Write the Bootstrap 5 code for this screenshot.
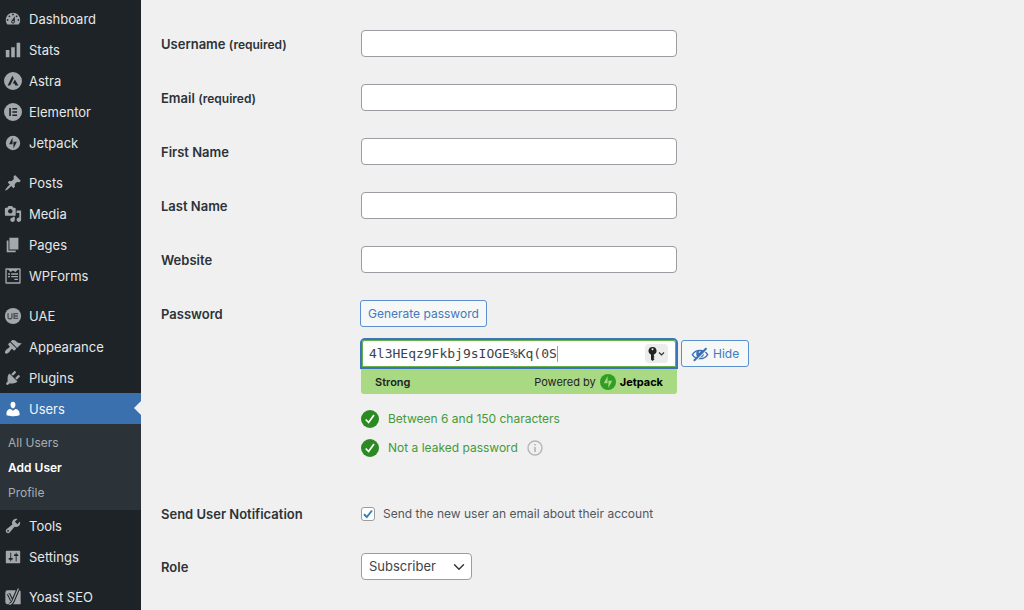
<!DOCTYPE html>
<html lang="en">
<head>
<meta charset="utf-8">
<meta name="viewport" content="width=device-width, initial-scale=1">
<title>Add User</title>
<link rel="stylesheet" href="https://cdn.jsdelivr.net/npm/bootstrap@5.3.0/dist/css/bootstrap.min.css">
<style>
  html { scrollbar-width: none; }
  html::-webkit-scrollbar { display: none; }
  body { background: #f0f0f0; color: #50575e; font: 13px/20px Inter, "Liberation Sans", sans-serif; }
  .admin-menu { width: 141px; background: #1d2327; padding-top: 3px; }
  .admin-menu .nav-link { display: flex; align-items: center; gap: 7px; height: 31px; padding: 0 4px; color: #e6e7e8; position: relative; }
  .admin-menu .nav-link svg { width: 18px; height: 18px; fill: #a3a8ad; flex: none; }
  .admin-menu .gap-above { margin-top: 9px; }
  .admin-menu .nav-link.active { background: #3a70ae; color: #f0f4f9; }
  .admin-menu .nav-link.active svg { fill: #fff; }
  .admin-menu .nav-link.active::after { content: ""; position: absolute; right: 0; top: 8px; border: 7px solid transparent; border-right-color: #f0f0f0; border-left: 0; }
  .submenu { background: #2c3338; padding: 6px 8px 5px; font-size: 12px; }
  .submenu a { display: block; line-height: 25px; color: #a9adb2; text-decoration: none; }
  .submenu .current { color: #fff; font-weight: 600; }
  .user-form { padding: 30px 20px 29px; }
  .field-row { display: flex; margin-bottom: 27px; }
  .field-name { width: 200px; flex: none; padding-top: 4px; color: #2c3338; font-weight: 600; }
  .field-name small { font-size: 12px; }
  .field-body { width: 316px; }
  .form-control, .form-select { height: 27px; min-height: 27px; padding: 0 7px; border: 1px solid #9a9da1; border-radius: 4px; font-size: 13px; color: #3c434a; }
  .form-select { width: 111px; background-size: 12px 12px; background-position: right 6px center; }
  .btn-wp { height: 27px; padding: 0 9px; border: 1px solid #5b8fcd; border-radius: 3px; background: #f6f7f7; color: #4379bd; font-size: 12px; line-height: 20px; }
  .btn-generate { padding: 0 7px; margin-left: -1px; }
  .pass-wrap { display: flex; align-items: flex-start; gap: 3px; margin-top: 11px; margin-left: -1px; }
  .pass-wrap .btn-wp { margin-top: 2px; }
  .pass-main { width: 318px; flex: none; }
  .pass-box { height: 31px; border: 2px solid #3a76b4; border-radius: 5px 5px 0 0; box-shadow: inset 0 0 0 1px #68b04a; background: #fff; padding: 0 8px 0 7px; }
  .pass-box input { width: 24ch; padding: 0; border: 0; outline: 0; background: none; color: #3c434a; font: 13px/20px "DejaVu Sans Mono", monospace; }
  .caret { width: 1px; height: 16px; background: #a0a3a6; }
  .key-btn { height: 19px; padding: 0 3px; border: 0; border-radius: 4px; background: #ececec; gap: 1px; }
  .meter { height: 25px; margin: 0 1px; padding: 0 14px; background: #a9d982; border-radius: 0 0 3px 3px; color: #1d2327; font-size: 11px; }
  .jp-brand { color: #000; font-weight: 700; }
  .checks { margin-top: 10px; font-size: 12px; }
  .check-item { display: flex; align-items: center; gap: 9px; height: 29px; color: #45993a; }
  .notify-row { margin: 42px 0 29px; align-items: center; }
  .notify-row label { font-size: 12px; }
  .form-check-input { width: 14px; height: 14px; margin: 0; border: 1px solid #9a9da1; border-radius: 3px !important; }
  .form-check-input:checked { background-color: #fff; border-color: #9a9da1; background-size: 14px; background-image: url("data:image/svg+xml,%3Csvg xmlns='http://www.w3.org/2000/svg' viewBox='0 0 14 14'%3E%3Cpath d='M3 7.2 5.8 10 11 3.5' fill='none' stroke='%233582c4' stroke-width='2'/%3E%3C/svg%3E"); }
</style>
</head>
<body>
<div class="d-flex min-vh-100">
  <nav class="admin-menu flex-shrink-0" aria-label="Main menu">
    <a class="nav-link" href="#"><svg viewBox="0 0 20 20"><path fill-rule="evenodd" d="M3.76 16h12.48c1.1-1.37 1.76-3.11 1.76-5 0-4.42-3.58-8-8-8s-8 3.58-8 8c0 1.89.66 3.63 1.76 5zM10 4c.55 0 1 .45 1 1s-.45 1-1 1-1-.45-1-1 .45-1 1-1zM6 6c.55 0 1 .45 1 1s-.45 1-1 1-1-.45-1-1 .45-1 1-1zm8 0c.55 0 1 .45 1 1s-.45 1-1 1-1-.45-1-1 .45-1 1-1zm-5.37 5.55L12 7v6c0 1.1-.9 2-2 2s-2-.9-2-2c0-.57.24-1.08.63-1.45zM4 10c.55 0 1 .45 1 1s-.45 1-1 1-1-.45-1-1 .45-1 1-1zm12 0c.55 0 1 .45 1 1s-.45 1-1 1-1-.45-1-1 .45-1 1-1zm-5 3c0-.55-.45-1-1-1s-1 .45-1 1 .45 1 1 1 1-.45 1-1z"/></svg>Dashboard</a>
    <a class="nav-link" href="#"><svg viewBox="0 0 20 20"><path d="M18 18V2h-4v16h4zm-6 0V7H8v11h4zm-6 0v-8H2v8h4z"/></svg>Stats</a>
    <a class="nav-link" href="#"><svg viewBox="0 0 20 20"><path fill-rule="evenodd" d="M10 0a10 10 0 1 0 0 20 10 10 0 0 0 0-20zM9.4 4.2 4 15h2.8l4-8zM12 8.3l-2.3 4.5h1.9l.9 2.2H16z"/></svg>Astra</a>
    <a class="nav-link" href="#"><svg viewBox="0 0 20 20"><path fill-rule="evenodd" d="M10 0a10 10 0 1 0 0 20 10 10 0 0 0 0-20zM5.8 5.5h1.8v9H5.8zM9.3 5.5h5.2v1.7H9.3zM9.3 9.1h5.2v1.8H9.3zM9.3 12.8h5.2v1.7H9.3z"/></svg>Elementor</a>
    <a class="nav-link" href="#"><svg viewBox="0 0 20 20"><path fill-rule="evenodd" d="M10 2a8 8 0 1 0 0 16 8 8 0 0 0 0-16zM9.5 4v7.3H5.7zM10.5 16V8.7h3.8z"/></svg>Jetpack</a>

    <a class="nav-link gap-above" href="#"><svg viewBox="0 0 20 20"><path d="M10.44 3.02l1.82-1.82 6.36 6.35-1.83 1.82c-1.05-.68-2.48-.57-3.41.36l-.75.75c-.92.93-1.04 2.35-.35 3.41l-1.83 1.82-2.41-2.41-2.8 2.79c-.42.42-3.38 2.71-3.8 2.29s1.86-3.39 2.28-3.81l2.79-2.79L4.1 9.36l1.83-1.82c1.05.69 2.48.57 3.4-.36l.75-.75c.93-.92 1.05-2.35.36-3.41z"/></svg>Posts</a>
    <a class="nav-link" href="#"><svg viewBox="0 0 20 20"><path fill-rule="evenodd" d="M13 11V4c0-.55-.45-1-1-1h-1.67L9 1H5L3.67 3H2c-.55 0-1 .45-1 1v7c0 .55.45 1 1 1h10c.55 0 1-.45 1-1zM7 4.5c1.38 0 2.5 1.12 2.5 2.5S8.38 9.5 7 9.5 4.5 8.38 4.5 7 5.62 4.5 7 4.5zM14 6h5v10.5c0 1.38-1.12 2.5-2.5 2.5S14 17.88 14 16.5s1.12-2.5 2.5-2.5c.17 0 .34.02.5.05V9h-3V6zm-4 8.05V13h2v3.5c0 1.38-1.12 2.5-2.5 2.5S7 17.88 7 16.5 8.12 14 9.5 14c.17 0 .34.02.5.05z"/></svg>Media</a>
    <a class="nav-link" href="#"><svg viewBox="0 0 20 20"><path d="M6 15V2h10v13H6zm-1 1h8v2H3V5h2v11z"/></svg>Pages</a>
    <a class="nav-link" href="#"><svg viewBox="0 0 20 20"><path fill-rule="evenodd" d="M2.5 1.5h15a1 1 0 0 1 1 1v15a1 1 0 0 1-1 1h-15a1 1 0 0 1-1-1v-15a1 1 0 0 1 1-1zM3 3v14h14V3h-1.7L12.7 5.5 10 3.8 7.3 5.5 4.7 3zM4.5 7h2.2v1.500H4.500zM8 7h7.500v1.500H8zM4.500 10h2.200v1.500H4.500zM8 10h7.500v1.500H8zM11.500 13h4v1.500h-4z"/></svg>WPForms</a>

    <a class="nav-link gap-above" href="#"><svg viewBox="0 0 20 20"><circle cx="10" cy="10" r="9"/><path d="M4.500 7v4.300q0 1.700 1.700 1.700h.9q1.700 0 1.700-1.700V7M15.800 7.300h-4.600v5.400h4.600M11.500 10h4" fill="none" stroke="#4b5157" stroke-width="1.500"/></svg>UAE</a>
    <a class="nav-link" href="#"><svg viewBox="0 0 20 20"><path d="M14.48 11.06L7.41 3.99l1.500-1.500c.5-.56 2.300-.47 3.510.32 1.210.8 1.430 1.280 2.910 2.100 1.180.64 2.450 1.260 4.450.85zm-.71.71L6.700 4.700 4.930 6.470c-.39.39-.39 1.020 0 1.410l1.060 1.060c.39.39.39 1.030 0 1.420-.6.6-1.430 1.110-2.210 1.690-.35.26-.7.53-1.010.84C1.430 14.230.4 16.080 1.400 17.070c.99 1 2.840-.03 4.180-1.360.31-.31.58-.66.85-1.020.57-.78 1.080-1.610 1.690-2.210.39-.39 1.020-.39 1.410 0l1.060 1.060c.39.39 1.020.39 1.410 0z"/></svg>Appearance</a>
    <a class="nav-link" href="#"><svg viewBox="0 0 20 20"><path d="M13.110 4.360L9.870 7.600 8 5.730l3.240-3.240c.35-.34 1.050-.2 1.560.32.52.51.66 1.210.31 1.550zm-8 1.770l.91-1.120 9.010 9.010-1.190.84c-.71.71-2.630 1.160-3.820 1.160H6.140L4.900 17.260c-.59.59-1.540.59-2.120 0-.59-.58-.59-1.530 0-2.120l1.240-1.240v-3.880c0-1.130.4-3.190 1.090-3.890zm7.260 3.970l3.240-3.240c.34-.35 1.040-.21 1.550.31.52.51.66 1.210.31 1.550l-3.240 3.250z"/></svg>Plugins</a>
    <a class="nav-link active" href="#" aria-current="true"><svg viewBox="0 0 20 20"><path d="M10 9.250c-2.270 0-2.730-3.440-2.730-3.440C7 4.020 7.820 2 9.970 2c2.160 0 2.980 2.020 2.710 3.810 0 0-.41 3.440-2.680 3.440zm0 2.570L12.720 10c2.390 0 4.520 2.330 4.520 4.530v2.490s-3.650 1.130-7.240 1.130c-3.650 0-7.240-1.130-7.240-1.130v-2.490c0-2.250 1.940-4.480 4.470-4.480z"/></svg>Users</a>
    <div class="submenu">
      <a href="#">All Users</a>
      <a href="#" class="current" aria-current="page">Add User</a>
      <a href="#">Profile</a>
    </div>
    <a class="nav-link" href="#"><svg viewBox="0 0 20 20"><path fill-rule="evenodd" d="M16.680 9.770c-1.340 1.340-3.300 1.670-4.950.99l-5.410 6.520c-.99.99-2.590.99-3.580 0s-.99-2.590 0-3.570l6.520-5.420c-.68-1.650-.35-3.610.99-4.950 1.280-1.280 3.120-1.620 4.720-1.060l-2.890 2.890 2.820 2.820 2.860-2.870c.53 1.580.18 3.390-1.080 4.650zM3.810 16.210c.4.39 1.040.39 1.430 0 .4-.4.4-1.040 0-1.430-.39-.4-1.030-.4-1.430 0-.39.39-.39 1.030 0 1.430z"/></svg>Tools</a>
    <a class="nav-link" href="#"><svg viewBox="0 0 20 20"><path fill-rule="evenodd" d="M18 16V4c0-.55-.45-1-1-1H3c-.55 0-1 .45-1 1v12c0 .55.45 1 1 1h14c.55 0 1-.45 1-1zM8 11h1c.55 0 1 .45 1 1s-.45 1-1 1H8v1.500c0 .28-.22.5-.5.5s-.5-.22-.5-.5V13H6c-.55 0-1-.45-1-1s.45-1 1-1h1V5.500c0-.28.22-.5.5-.5s.5.22.5.5V11zm5-2h-1c-.55 0-1-.45-1-1s.45-1 1-1h1V5.500c0-.28.22-.5.5-.5s.5.22.5.5V7h1c.55 0 1 .45 1 1s-.45 1-1 1h-1v5.500c0 .28-.22.5-.5.5s-.5-.22-.5-.5V9z"/></svg>Settings</a>
    <a class="nav-link gap-above" href="#"><svg viewBox="0 0 20 20"><path d="M4 2.500h13A2 2 0 0 1 18.500 5V18H4a2.500 2.500 0 0 1-2.500-2.500V5A2.500 2.500 0 0 1 4 2.500z"/><path d="M5 6.500 8.500 13.500M16 .5 9.800 15q-1.300 3.200-4.300 3.500" fill="none" stroke="#1d2327" stroke-width="3.800"/><path d="M5 6.500 8.600 13.800M16 .5 9.800 15q-1.300 3-4.300 3" fill="none" stroke="#a3a8ad" stroke-width="1.400"/></svg>Yoast SEO</a>
  </nav>

  <main class="flex-grow-1">
    <form class="user-form">
      <div class="field-row"><label class="field-name" for="user">Username <small>(required)</small></label><div class="field-body"><input class="form-control" id="user" type="text"></div></div>
      <div class="field-row"><label class="field-name" for="email">Email <small>(required)</small></label><div class="field-body"><input class="form-control" id="email" type="email"></div></div>
      <div class="field-row"><label class="field-name" for="first">First Name</label><div class="field-body"><input class="form-control" id="first" type="text"></div></div>
      <div class="field-row"><label class="field-name" for="last">Last Name</label><div class="field-body"><input class="form-control" id="last" type="text"></div></div>
      <div class="field-row"><label class="field-name" for="site">Website</label><div class="field-body"><input class="form-control" id="site" type="url"></div></div>

      <div class="field-row mb-0">
        <label class="field-name" for="pass">Password</label>
        <div class="field-body">
          <button class="btn btn-wp btn-generate" type="button">Generate password</button>
          <div class="pass-wrap">
            <div class="pass-main">
              <div class="pass-box d-flex align-items-center">
                <input id="pass" type="text" value="4l3HEqz9Fkbj9sIOGE%Kq(0S" spellcheck="false">
                <span class="caret"></span>
                <button class="key-btn d-flex align-items-center ms-auto" type="button" aria-label="Saved passwords">
                  <svg width="9" height="14" viewBox="0 0 9 14"><path fill="#222" fill-rule="evenodd" d="M4.500 0A4 4 0 0 0 3 7.700V12.500L4.500 14 6.500 12.200 5.500 11 6.500 10 5.800 9V7.800A4 4 0 0 0 4.500 0zM4.500 1.300a1 1 0 1 1 0 2 1 1 0 0 1 0-2z"/></svg>
                  <svg width="7" height="6" viewBox="0 0 7 6"><path d="M1 1.500 3.500 4 6 1.500" fill="none" stroke="#333" stroke-width="1.200"/></svg>
                </button>
              </div>
              <div class="meter d-flex align-items-center justify-content-between">
                <strong class="fw-semibold">Strong</strong>
                <span class="d-flex align-items-center gap-1">Powered by
                  <svg width="16" height="16" viewBox="0 0 16 16"><circle cx="8" cy="8" r="8" fill="#2f9e22"/><path d="M7.600 2v7.300H3.800zM8.400 14V6.700h3.800z" fill="#a9d982"/></svg>
                  <span class="jp-brand">Jetpack</span>
                </span>
              </div>
            </div>
            <button class="btn btn-wp d-flex align-items-center gap-1 flex-shrink-0" type="button">
              <svg width="18" height="18" viewBox="0 0 20 20"><path d="M1.500 10.600Q4.500 6 10 6t8.500 4.600Q15.500 15.200 10 15.200T1.500 10.600z" fill="none" stroke="#3a70b8" stroke-width="1.500"/><circle cx="10" cy="9.800" r="4.200" fill="#3a70b8"/><path d="M10.500 7.200q-1.500 0-1.500 1.500" fill="none" stroke="#f6f7f7" stroke-width="1.200"/><path d="M4.800 18 18 4.800" stroke="#f6f7f7" stroke-width="1.500"/><path d="M3.800 17 16.600 4.200" stroke="#3a70b8" stroke-width="2.200" stroke-linecap="round"/></svg>Hide</button>
          </div>
          <div class="checks">
            <div class="check-item"><svg width="18" height="18" viewBox="0 0 18 18"><circle cx="9" cy="9" r="9" fill="#2c8a22"/><path d="M4.700 9.500 7.600 12.500 13 5" fill="none" stroke="#fff" stroke-width="1.700"/></svg>Between 6 and 150 characters</div>
            <div class="check-item"><svg width="18" height="18" viewBox="0 0 18 18"><circle cx="9" cy="9" r="9" fill="#2c8a22"/><path d="M4.700 9.500 7.600 12.500 13 5" fill="none" stroke="#fff" stroke-width="1.700"/></svg>Not a leaked password
              <svg width="16" height="16" viewBox="0 0 16 16"><circle cx="8" cy="8" r="7" fill="none" stroke="#b4b6b8" stroke-width="1.400"/><path d="M8 4v1.600M8 7v5" stroke="#a8aaad" stroke-width="1.400"/></svg></div>
          </div>
        </div>
      </div>

      <div class="field-row notify-row">
        <div class="field-name pt-0">Send User Notification</div>
        <div class="d-flex align-items-center gap-2"><input class="form-check-input" type="checkbox" id="notify" checked><label for="notify">Send the new user an email about their account</label></div>
      </div>
      <div class="field-row mb-0">
        <label class="field-name" for="role">Role</label>
        <select class="form-select" id="role"><option>Subscriber</option><option>Editor</option></select>
      </div>
    </form>
  </main>
</div>
<script src="https://cdn.jsdelivr.net/npm/bootstrap@5.3.0/dist/js/bootstrap.bundle.min.js"></script>
</body>
</html>
